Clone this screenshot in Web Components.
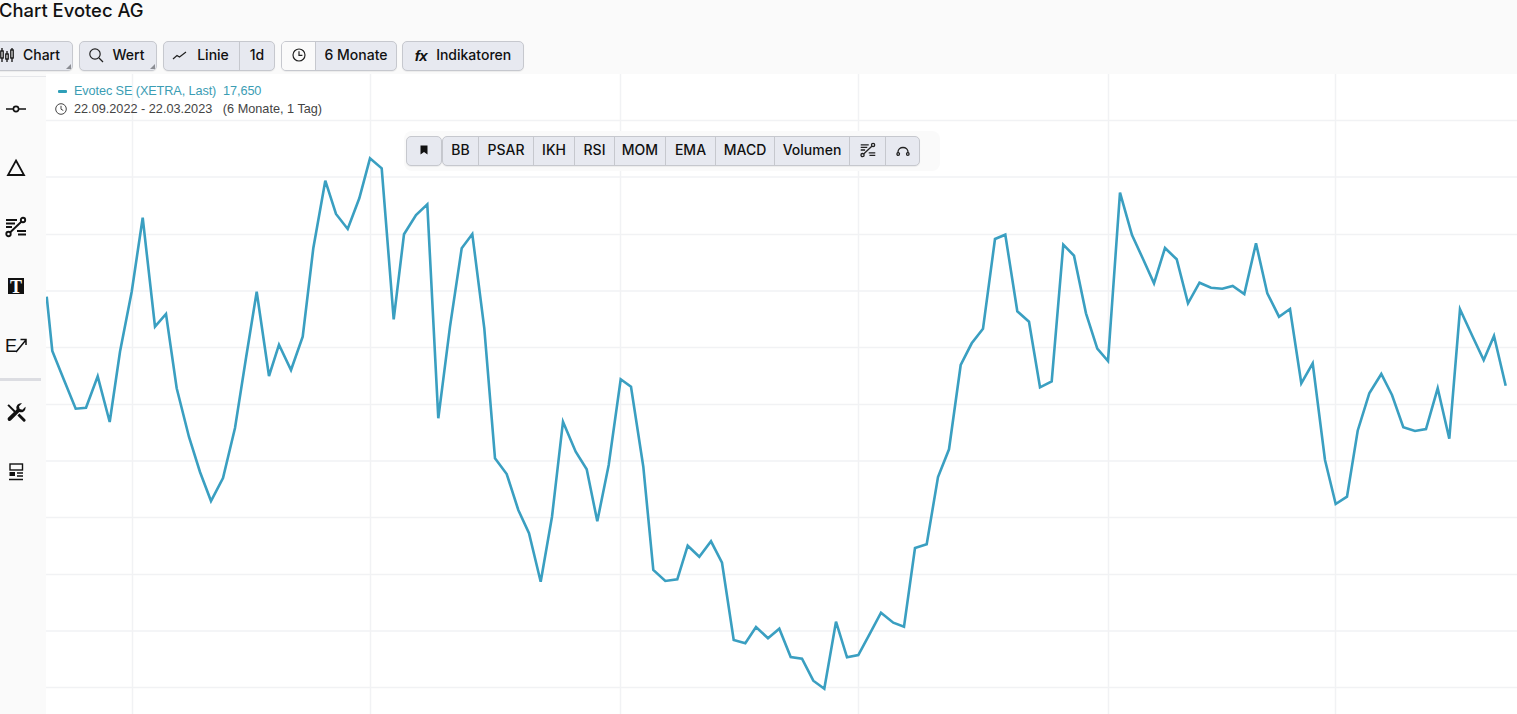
<!DOCTYPE html>
<html lang="de">
<head>
<meta charset="utf-8">
<title>Chart Evotec AG</title>
<style>
  html, body { margin: 0; height: 714px; overflow: hidden; background: #fff; }
  body { font-family: Inter, "Liberation Sans", sans-serif; color: #111; }
</style>
</head>
<body>
<chart-page>
  <chart-header title-text="Chart Evotec AG">
    <tool-group corner>
      <tool-btn size="80" style="padding-right:4px">
        <svg slot="icon" width="14" height="16" viewBox="0 0 14 16" fill="none" stroke="#111" stroke-width="1.3"><path d="M2 1v14M7 4v11M12 1v14"/><rect x=".8" y="4" width="2.4" height="7" fill="#fff"/><rect x="5.8" y="7" width="2.4" height="5" fill="#fff"/><rect x="10.8" y="3" width="2.4" height="8" fill="#fff"/></svg>
        Chart
      </tool-btn>
    </tool-group>
    <tool-group corner>
      <tool-btn size="76" style="padding-right:4px">
        <svg slot="icon" width="16" height="16" viewBox="0 0 16 16" fill="none" stroke="#222" stroke-width="1.2"><circle cx="7" cy="7" r="5.2"/><path d="M11 11l4 4"/></svg>
        Wert
      </tool-btn>
    </tool-group>
    <tool-group>
      <tool-btn size="75" style="padding-right:2px">
        <svg slot="icon" width="16" height="16" viewBox="0 0 16 16" fill="none" stroke="#222" stroke-width="1.2"><path d="M1 12l4-3.5 2.5 1.5L14 5"/></svg>
        Linie
      </tool-btn>
      <tool-btn size="35">1d</tool-btn>
    </tool-group>
    <tool-group>
      <tool-btn light size="33">
        <svg slot="icon" width="16" height="16" viewBox="0 0 16 16" fill="none" stroke="#222" stroke-width="1.2"><circle cx="8" cy="8" r="6"/><path d="M8 4.200V8.400h3.400"/></svg>
      </tool-btn>
      <tool-btn size="81">6 Monate</tool-btn>
    </tool-group>
    <tool-group style="margin-left:-1px">
      <tool-btn size="120">
        <span slot="icon" style="font:italic 700 15px 'Liberation Sans',sans-serif;letter-spacing:-.5px">fx</span>
        Indikatoren
      </tool-btn>
    </tool-group>
  </chart-header>
  <div style="display:flex;height:640px">
    <side-rail>
      <rail-icon><svg width="22" height="22" viewBox="0 0 22 22" fill="none" stroke="#111" stroke-width="1.6"><path d="M1 11h7.400M13.600 11H21"/><circle cx="11" cy="11" r="2.600"/></svg></rail-icon>
      <rail-icon><svg width="22" height="22" viewBox="0 0 22 22" fill="none" stroke="#111" stroke-width="1.8"><path d="M11 3.500L19 18H3z"/></svg></rail-icon>
      <rail-icon><svg width="22" height="22" viewBox="0 0 22 22" fill="none" stroke="#111" stroke-width="1.900"><path d="M1 4h11M1 7.500h9M1 11h6M12 15h9M13 18.500h8"/><circle cx="3.500" cy="18" r="2.200"/><circle cx="18" cy="4" r="2.200"/><path d="M5.300 16.200L16.300 5.800"/></svg></rail-icon>
      <rail-icon><svg width="22" height="22" viewBox="0 0 22 22"><rect x="3" y="3" width="16" height="16" fill="#111"/><text x="11" y="17.500" text-anchor="middle" font-family="Liberation Serif, serif" font-weight="700" font-size="18" fill="#fff">T</text></svg></rail-icon>
      <rail-icon><svg width="22" height="22" viewBox="0 0 22 22" fill="none" stroke="#111" stroke-width="1.500"><text x="0" y="18" font-family="Liberation Sans, sans-serif" font-size="18" fill="#111" stroke="none">E</text><path d="M11 18L20.500 6.500M15.500 5.500h5.500v5.500"/></svg></rail-icon>
      <rail-sep></rail-sep>
      <rail-icon><svg width="22" height="22" viewBox="0 0 22 22" fill="#111"><path d="M2.400 3.600L3.800 2.200l7.600 7.600-1.400 1.400z"/><path d="M12.400 13.400l2-2 5.800 5.800a1.400 1.400 0 010 2l-.1.100a1.400 1.400 0 01-2 0z"/><path d="M20.600 5.600a4.600 4.600 0 01-6.300 4.400L5.800 18.600a2 2 0 01-2.800-2.800l8.600-8.400A4.600 4.600 0 0117 1.300l-3 3 .7 2.700 2.700.7 3-3c.1.300.2.600.2.900z"/></svg></rail-icon>
      <rail-icon><svg width="22" height="22" viewBox="0 0 22 22" fill="none" stroke="#111" stroke-width="1.400"><rect x="5" y="3" width="12.500" height="6"/><rect x="4.500" y="11" width="5.500" height="4" fill="#111" stroke="none"/><path d="M12 12h6M12 15h6M4 18.500h14"/></svg></rail-icon>
    </side-rail>
    <price-chart>
      <chart-legend></chart-legend>
      <indicator-bar>
        <tool-group slot="pin">
          <tool-btn size="34">
            <svg slot="icon" width="10" height="10" viewBox="0 0 10 10" fill="#111"><path d="M1.500 .5h7v9L5 7 1.500 9.500z"/></svg>
          </tool-btn>
        </tool-group>
        <tool-group>
          <tool-btn size="35">BB</tool-btn>
          <tool-btn size="55">PSAR</tool-btn>
          <tool-btn size="41">IKH</tool-btn>
          <tool-btn size="40">RSI</tool-btn>
          <tool-btn size="51">MOM</tool-btn>
          <tool-btn size="50">EMA</tool-btn>
          <tool-btn size="59">MACD</tool-btn>
          <tool-btn size="75">Volumen</tool-btn>
          <tool-btn size="36"><svg slot="icon" width="16" height="16" viewBox="0 0 22 22" fill="none" stroke="#222" stroke-width="1.800"><path d="M1 4h11M1 7.500h9M1 11h6M12 15h9M13 18.500h8"/><circle cx="3.500" cy="18" r="2.200"/><circle cx="18" cy="4" r="2.200"/><path d="M5.300 16.200L16.300 5.800"/></svg></tool-btn>
          <tool-btn size="34"><svg slot="icon" width="14" height="14" viewBox="0 0 14 14" fill="none" stroke="#222" stroke-width="1.300"><path d="M2 10V9a5 4.500 0 0110 0v1"/><circle cx="2.200" cy="11" r="1.300"/><circle cx="11.800" cy="11" r="1.300"/></svg></tool-btn>
        </tool-group>
      </indicator-bar>
    </price-chart>
  </div>
</chart-page>

<script>
class ChartPage extends HTMLElement {
  constructor() {
    super();
    this.attachShadow({ mode: "open" }).innerHTML = `
      <style>
        :host { display: block; width: 1517px; height: 714px; overflow: hidden; background: #fff; }
      </style>
      <slot></slot>`;
  }
}

class ChartHeader extends HTMLElement {
  constructor() {
    super();
    this.attachShadow({ mode: "open" }).innerHTML = `
      <style>
        :host { display: block; height: 74px; background: #fafafa; overflow: hidden; }
        h1 { margin: 0 0 0 -1px; height: 41px; font: 500 18.4px/21px Inter, "Liberation Sans", sans-serif; color: #111; }
        .bar { display: flex; gap: 6px; margin-left: -9px; }
      </style>
      <h1></h1>
      <div class="bar"><slot></slot></div>`;
  }

  connectedCallback() {
    this.shadowRoot.querySelector("h1").textContent = this.getAttribute("title-text");
  }
}

class ToolGroup extends HTMLElement {
  constructor() {
    super();
    this.attachShadow({ mode: "open" }).innerHTML = `
      <style>
        :host {
          display: inline-flex; position: relative; height: 28px;
          border: 1px solid #c6c8ce; border-radius: 5px; overflow: hidden;
          background: #e7e9f0; box-shadow: 0 1px 1px rgba(0,0,0,.06);
        }
        ::slotted(tool-btn:not(:first-child)) { border-left: 1px solid #c6c8ce; }
        .corner {
          display: none; position: absolute; right: 1px; bottom: 1px; width: 0; height: 0;
          border-left: 5px solid transparent; border-bottom: 5px solid #8b8d93;
        }
        :host([corner]) .corner { display: block; }
      </style>
      <slot></slot>
      <span class="corner"></span>`;
  }
}

class ToolBtn extends HTMLElement {
  constructor() {
    super();
    this.attachShadow({ mode: "open" }).innerHTML = `
      <style>
        :host {
          display: inline-flex; align-items: center; justify-content: center; gap: 9px;
          box-sizing: border-box; height: 28px; padding: 0 0 2px;
          font: 500 14px/1 Inter, "Liberation Sans", sans-serif; color: #111; white-space: nowrap;
        }
        :host([light]) { background: #fafafa; }
        ::slotted([slot="icon"]) { display: block; flex: none; }
        slot[name="icon"] { display: contents; }
      </style>
      <slot name="icon"></slot><slot></slot>`;
  }

  connectedCallback() {
    const size = this.getAttribute("size");
    if (size) this.style.width = size + "px";
  }
}

class SideRail extends HTMLElement {
  constructor() {
    super();
    this.attachShadow({ mode: "open" }).innerHTML = `
      <style>
        :host {
          display: flex; flex-direction: column; flex: none; box-sizing: border-box;
          width: 46px; height: 640px; padding-top: 5px; background: #fafafa;
          position: relative;
        }
        :host::before { content: ""; position: absolute; left: 0; top: 2px; width: 46px; height: 1px; background: #e6e7ea; }
      </style>
      <slot></slot>`;
  }
}

class RailIcon extends HTMLElement {
  constructor() {
    super();
    this.attachShadow({ mode: "open" }).innerHTML = `
      <style>
        :host { display: flex; align-items: center; justify-content: center; width: 32px; height: 59px; flex: none; }
        ::slotted(svg) { display: block; }
      </style>
      <slot></slot>`;
  }
}

class RailSep extends HTMLElement {
  constructor() {
    super();
    this.attachShadow({ mode: "open" }).innerHTML = `
      <style>
        :host { display: block; width: 41px; height: 3px; margin: 4px 0 2px; background: #dcdde2; flex: none; }
      </style>`;
  }
}

// page coordinates of the series, read off the chart
const POINTS = [
  [46.7,296.7],[52.3,351],[64,380],[75.7,408.7],[86,407.7],[97.7,376.3],[109.7,422],[120,351.7],[131.7,291.7],
  [142.7,217.7],[155,326.7],[166,314],[176.7,388.3],[189,437],[200,472],[211,501],[223,478],[235,428],[246,358],
  [256.7,291.7],[269,376],[279,344.7],[291,370],[302.7,336.7],[313.3,248.3],[325.3,180.7],[336,214],[347.7,229],
  [359.3,198.3],[370,158.3],[381.7,168.3],[393.7,319.3],[404,234.3],[416,215],[427.3,204.3],[438.3,418.3],[450,326.7],
  [461.7,248.3],[472.3,234],[484.3,328.3],[495,458.3],[506.7,474],[518.3,510],[529,533.3],[540.7,581.7],[552,516.7],
  [563,421.7],[575.7,451.7],[586.7,469.3],[597.3,521.3],[608.7,465],[620.7,379.3],[631,386.7],[643.3,466.7],[653.3,570],
  [665.3,581],[677.3,579.3],[687.7,545.7],[699.3,556.7],[711,541.3],[722,562.7],[733.7,640],[745.3,643.3],[756,627],
  [768,638.3],[779.3,628.7],[790.7,657],[802,658.7],[813.3,680.7],[824.3,688.7],[836,621.7],[847,657.3],[858.3,655],
  [870,633.3],[881,612.7],[893.3,622.7],[904,626.7],[915,548],[926.7,544.3],[938,477],[949,449.3],[960.7,365],
  [971.7,343.3],[983,328.7],[995,239],[1005.3,234.7],[1017.3,311.3],[1029,321.7],[1040,387.3],[1051.7,381.3],[1063.3,244.7],
  [1074,255.7],[1086,313.3],[1097.3,348.7],[1108,361],[1120,192.7],[1132,235],[1142.7,258.3],[1154,283.3],[1165,248],
  [1176.7,259.3],[1188,303.3],[1199.5,282.7],[1211,287.7],[1222.3,288.7],[1232.7,286],[1244.3,294],[1256,243.3],[1267.3,293.3],
  [1279,316.7],[1290,309],[1301.3,383.3],[1312.7,363.3],[1325,460],[1335.7,504],[1347,496.7],[1357.7,430.7],[1369.3,393.3],
  [1381.3,374],[1392,395],[1403.3,427.3],[1415,431],[1426,429],[1437.7,388.3],[1449.3,438.7],[1460,309.3],[1472.7,336.7],
  [1483.7,360],[1494,336],[1505.7,385.7]
];
const GRID_Y = [120.5,177,234.5,291,347.5,404.5,461,517.5,574.5,631,687.5];
const GRID_X = [132.5,370.5,620.5,858.5,1108.5,1335.5];

class PriceChart extends HTMLElement {
  constructor() {
    super();
    const hLines = GRID_Y.map(y => `<path d="M46 ${y}H1517"/>`).join("");
    const vLines = GRID_X.map(x => `<path d="M${x} 74V714"/>`).join("");
    const line = POINTS.map(p => p.join(",")).join(" ");
    this.attachShadow({ mode: "open" }).innerHTML = `
      <style>
        :host { display: block; position: relative; flex: 1; height: 640px; background: #fff; overflow: hidden; }
        svg { display: block; position: absolute; inset: 0; }
      </style>
      <svg width="1471" height="640" viewBox="46 74 1471 640" fill="none">
        <g stroke="#f1f2f4" stroke-width="1.5">${hLines}${vLines}</g>
        <polyline points="${line}" stroke="#3a9fc1" stroke-width="2.6" stroke-linejoin="miter"/>
      </svg>
      <slot></slot>`;
  }
}

class ChartLegend extends HTMLElement {
  constructor() {
    super();
    this.attachShadow({ mode: "open" }).innerHTML = `
      <style>
        :host {
          display: block; position: absolute; left: 9px; top: 8px;
          font: 12.7px/18px "Liberation Sans", Arial, sans-serif; color: #444;
        }
        .row { display: flex; align-items: center; gap: 7px; height: 18px; }
        .row span { white-space: pre; }
        .dash { width: 9px; height: 3px; margin-left: 3px; background: #2f9fb8; border-radius: 1px; }
        .name { color: #3b9db4; letter-spacing: -.1px; }
        svg { display: block; }
      </style>
      <div class="row"><span class="dash"></span><span class="name">Evotec SE (XETRA, Last)  17,650</span></div>
      <div class="row"><svg width="12" height="12" viewBox="0 0 12 12" fill="none" stroke="#444" stroke-width="1"><circle cx="6" cy="6" r="5.300"/><path d="M6 2.800v3.400l2.300 1.300"/></svg><span>22.09.2022 - 22.03.2023   (6 Monate, 1 Tag)</span></div>`;
  }
}

class IndicatorBar extends HTMLElement {
  constructor() {
    super();
    this.attachShadow({ mode: "open" }).innerHTML = `
      <style>
        :host {
          display: flex; position: absolute; left: 358px; top: 57px;
          box-sizing: border-box; width: 536px; height: 40px;
          padding: 5px 0 0 2px; background: #fafafa; border-radius: 8px;
        }
      </style>
      <slot name="pin"></slot><slot></slot>`;
  }
}

customElements.define("chart-page", ChartPage);
customElements.define("chart-header", ChartHeader);
customElements.define("tool-group", ToolGroup);
customElements.define("tool-btn", ToolBtn);
customElements.define("side-rail", SideRail);
customElements.define("rail-icon", RailIcon);
customElements.define("rail-sep", RailSep);
customElements.define("price-chart", PriceChart);
customElements.define("chart-legend", ChartLegend);
customElements.define("indicator-bar", IndicatorBar);
</script>
</body>
</html>
